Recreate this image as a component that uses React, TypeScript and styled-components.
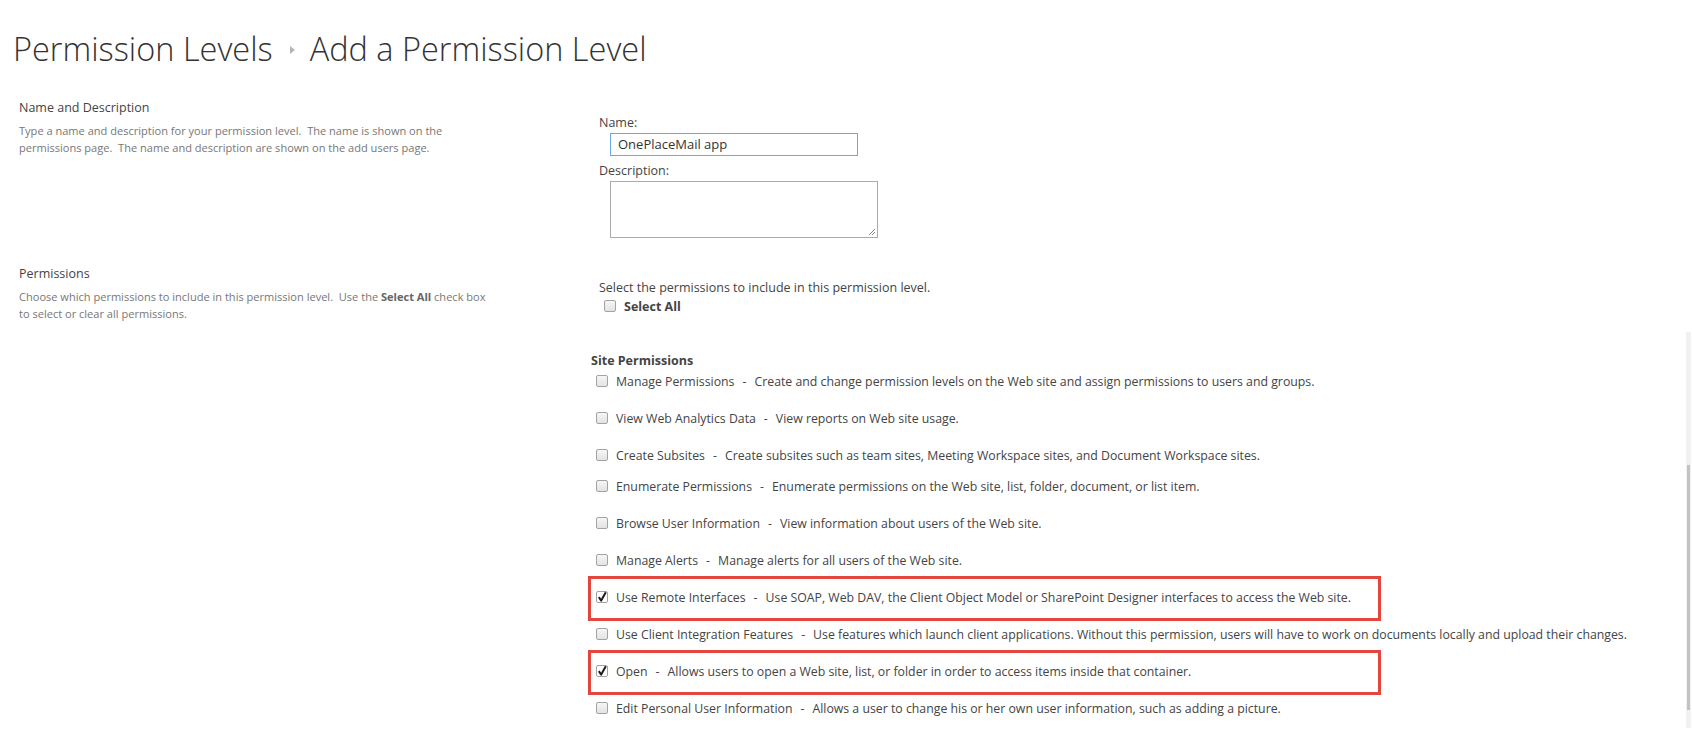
import React from "react";
import styled, { createGlobalStyle } from "styled-components";

const GlobalStyle = createGlobalStyle`
  html, body {
    margin: 0;
    padding: 0;
    background: #ffffff;
  }
  body {
    font-family: "Open Sans", "Noto Sans", sans-serif;
    color: #444444;
  }
`;

const Page = styled.div`
  position: relative;
  width: 1692px;
  height: 745px;
  overflow: hidden;
`;

const PageTitle = styled.h1`
  margin: 0;
  padding: 27px 0 0 13px;
  font-size: 32.5px;
  line-height: 44px;
  font-weight: 300;
  color: #333333;
  display: flex;
  align-items: center;
`;

const Crumb = styled.span`
  white-space: nowrap;
`;

const CrumbArrow = styled.span`
  display: inline-block;
  width: 0;
  height: 0;
  margin: 2px 15px 0 17px;
  border-top: 4px solid transparent;
  border-bottom: 4px solid transparent;
  border-left: 5px solid #b5b5b5;
`;

const Form = styled.div`
  display: flex;
  flex-direction: column;
  gap: 27px;
  margin-top: 28px;
`;

const Section = styled.div`
  display: grid;
  grid-template-columns: 591px 1fr;
`;

const SectionInfo = styled.div`
  padding-left: 19px;
`;

const SectionTitle = styled.div`
  font-size: 12.5px;
  line-height: 18px;
  color: #444444;
`;

const SectionDesc = styled.div`
  margin-top: 5px;
  width: 468px;
  font-size: 11.05px;
  line-height: 17px;
  color: #777777;

  b {
    font-weight: 700;
    color: #666666;
  }
`;

const SectionBody = styled.div<{ $top: number }>`
  padding-top: ${(p) => p.$top}px;
`;

const FieldLabel = styled.div<{ $gap?: number }>`
  margin-top: ${(p) => p.$gap ?? 0}px;
  padding-left: 8px;
  font-size: 12.5px;
  line-height: 18px;
  color: #444444;
`;

const TextInput = styled.div`
  box-sizing: border-box;
  margin: 1px 0 0 19px;
  width: 248px;
  height: 23px;
  padding: 0 7px;
  border: 1px solid #6fa6e6;
  font-size: 13px;
  line-height: 21px;
  color: #333333;
`;

const TextArea = styled.div`
  position: relative;
  box-sizing: border-box;
  margin: 1px 0 0 19px;
  width: 268px;
  height: 57px;
  border: 1px solid #ababab;
`;

const Grip = styled.svg`
  position: absolute;
  right: 1px;
  bottom: 1px;
`;

const SelectAllRow = styled.div`
  display: flex;
  align-items: center;
  height: 18px;
  padding-left: 13px;
  gap: 8px;
  font-size: 12.5px;
  font-weight: 700;
  color: #444444;
`;

const GroupTitle = styled.div`
  margin-top: 37px;
  font-size: 12.5px;
  line-height: 18px;
  font-weight: 700;
  color: #444444;
`;

const PermList = styled.div`
  display: flex;
  flex-direction: column;
`;

const PermRow = styled.div<{ $gap: number; $marked?: boolean }>`
  position: relative;
  display: flex;
  align-items: center;
  height: 20px;
  margin-top: ${(p) => p.$gap}px;
  padding-left: 5px;
  gap: 8px;
  font-size: 12.3px;
  color: #444444;
  white-space: nowrap;

  ${(p) =>
    p.$marked &&
    `
    &::after {
      content: "";
      position: absolute;
      left: -3px;
      top: -11px;
      width: 793px;
      height: 45px;
      box-sizing: border-box;
      border: 3px solid #e4463d;
    }
  `}
`;

const Dash = styled.span`
  margin: 0 8px;
`;

const Box = styled.span<{ $checked?: boolean }>`
  position: relative;
  flex: none;
  box-sizing: border-box;
  width: 12px;
  height: 12px;
  border: 1px solid #a3a3a3;
  border-radius: 2px;
  background: ${(p) =>
    p.$checked ? "#ffffff" : "linear-gradient(#f6f6f6, #e3e3e3)"};
`;

const Tick = styled.svg`
  position: absolute;
  left: 0;
  top: -2px;
`;

const Scrollbar = styled.div`
  position: absolute;
  right: 1px;
  top: 332px;
  width: 5px;
  height: 396px;
  background: #f1f1f1;
`;

const ScrollThumb = styled.div`
  margin: 133px 0 0 1px;
  width: 3px;
  height: 245px;
  background: #c3c3c3;
`;

const Check = ({ checked }: { checked?: boolean }) => (
  <Box $checked={checked}>
    {checked && (
      <Tick width="11" height="13" viewBox="0 0 11 13">
        <path d="M1.8 7.2 L4.2 10.6 L8.8 2.2" fill="none" stroke="#1e1e1e" strokeWidth="2" strokeLinejoin="round" />
      </Tick>
    )}
  </Box>
);

const permissions = [
  { name: "Manage Permissions", desc: "Create and change permission levels on the Web site and assign permissions to users and groups.", gap: 1 },
  { name: "View Web Analytics Data", desc: "View reports on Web site usage.", gap: 17 },
  { name: "Create Subsites", desc: "Create subsites such as team sites, Meeting Workspace sites, and Document Workspace sites.", gap: 17 },
  { name: "Enumerate Permissions", desc: "Enumerate permissions on the Web site, list, folder, document, or list item.", gap: 11 },
  { name: "Browse User Information", desc: "View information about users of the Web site.", gap: 17 },
  { name: "Manage Alerts", desc: "Manage alerts for all users of the Web site.", gap: 17 },
  { name: "Use Remote Interfaces", desc: "Use SOAP, Web DAV, the Client Object Model or SharePoint Designer interfaces to access the Web site.", gap: 17, checked: true },
  { name: "Use Client Integration Features", desc: "Use features which launch client applications. Without this permission, users will have to work on documents locally and upload their changes.", gap: 17 },
  { name: "Open", desc: "Allows users to open a Web site, list, or folder in order to access items inside that container.", gap: 17, checked: true },
  { name: "Edit Personal User Information", desc: "Allows a user to change his or her own user information, such as adding a picture.", gap: 17 },
];

export default function App() {
  return (
    <Page>
      <GlobalStyle />
      <PageTitle>
        <Crumb>Permission Levels</Crumb>
        <CrumbArrow />
        <Crumb>Add a Permission Level</Crumb>
      </PageTitle>

      <Form>
        <Section>
          <SectionInfo>
            <SectionTitle>Name and Description</SectionTitle>
            <SectionDesc>
              Type a name and description for your permission level.&nbsp; The name is shown on the permissions page.&nbsp; The name and description are shown on the add users page.
            </SectionDesc>
          </SectionInfo>
          <SectionBody $top={15}>
            <FieldLabel>Name:</FieldLabel>
            <TextInput>OnePlaceMail app</TextInput>
            <FieldLabel $gap={6}>Description:</FieldLabel>
            <TextArea>
              <Grip width="9" height="9" viewBox="0 0 9 9">
                <path d="M8 2 L2 8 M8 5 L5 8" stroke="#888" strokeWidth="1" />
              </Grip>
            </TextArea>
          </SectionBody>
        </Section>

        <Section>
          <SectionInfo>
            <SectionTitle>Permissions</SectionTitle>
            <SectionDesc>
              Choose which permissions to include in this permission level.&nbsp; Use the <b>Select All</b> check box to select or clear all permissions.
            </SectionDesc>
          </SectionInfo>
          <SectionBody $top={14}>
            <FieldLabel>Select the permissions to include in this permission level.</FieldLabel>
            <SelectAllRow>
              <Check />
              Select All
            </SelectAllRow>
            <GroupTitle>Site Permissions</GroupTitle>
            <PermList>
              {permissions.map((p) => (
                <PermRow key={p.name} $gap={p.gap} $marked={p.checked}>
                  <Check checked={p.checked} />
                  <span>
                    {p.name}
                    <Dash>-</Dash>
                    {p.desc}
                  </span>
                </PermRow>
              ))}
            </PermList>
          </SectionBody>
        </Section>
      </Form>

      <Scrollbar>
        <ScrollThumb />
      </Scrollbar>
    </Page>
  );
}
